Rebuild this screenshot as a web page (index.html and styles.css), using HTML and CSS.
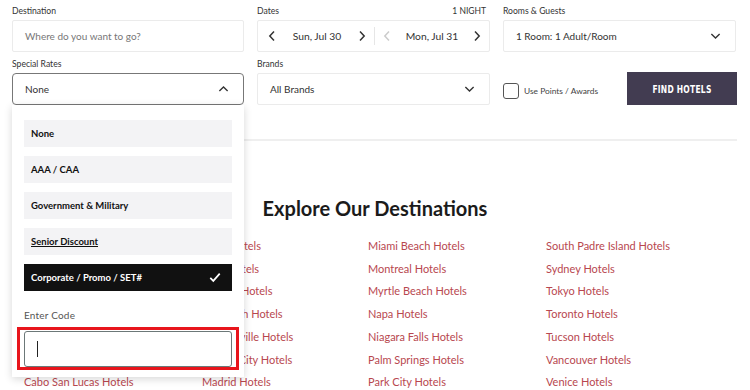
FILE: index.html
```html
<!DOCTYPE html>
<html>
<head>
    <title>Find Hotels</title>
    <link rel="stylesheet" href="styles.css">
</head>
<body>
    <div class="search">
        <div class="search-row">
            <div class="field field-dest">
                <div class="field-label">Destination</div>
                <div class="box box-light"><span class="placeholder">Where do you want to go?</span></div>
            </div>
            <div class="field field-dates">
                <div class="field-label">Dates <span class="nights">1 NIGHT</span></div>
                <div class="box box-light dates">
                    <div class="date">
                        <svg class="arrow" viewBox="0 0 8 12"><path d="M6 1.5L1.8 6L6 10.5" /></svg>
                        <span>Sun, Jul 30</span>
                        <svg class="arrow" viewBox="0 0 8 12"><path d="M2 1.5L6.2 6L2 10.5" /></svg>
                    </div>
                    <div class="date-divider"></div>
                    <div class="date">
                        <svg class="arrow arrow-off" viewBox="0 0 8 12"><path d="M6 1.5L1.8 6L6 10.5" /></svg>
                        <span>Mon, Jul 31</span>
                        <svg class="arrow" viewBox="0 0 8 12"><path d="M2 1.5L6.2 6L2 10.5" /></svg>
                    </div>
                </div>
            </div>
            <div class="field field-rooms">
                <div class="field-label">Rooms &amp; Guests</div>
                <div class="box box-light select">
                    <span>1 Room: 1 Adult/Room</span>
                    <svg class="chevron" viewBox="0 0 12 8"><path d="M1.5 1.8L6 6.2L10.5 1.8" /></svg>
                </div>
            </div>
        </div>

        <div class="search-row">
            <div class="field field-dest rates">
                <div class="field-label">Special Rates</div>
                <div class="box box-open select">
                    <span>None</span>
                    <svg class="chevron" viewBox="0 0 12 8"><path d="M1.5 6.2L6 1.8L10.5 6.2" /></svg>
                </div>

                <div class="rates-menu">
                    <div class="rate">None</div>
                    <div class="rate">AAA / CAA</div>
                    <div class="rate">Government &amp; Military</div>
                    <div class="rate rate-hover">Senior Discount</div>
                    <div class="rate rate-selected">
                        Corporate / Promo / SET#
                        <svg class="check" viewBox="0 0 14 12"><path d="M1.5 6.5L5 10L12.5 1.5" /></svg>
                    </div>
                    <div class="code-label">Enter Code</div>
                    <div class="code-highlight">
                        <div class="code-input"><span class="caret"></span></div>
                    </div>
                </div>
            </div>
            <div class="field field-dates">
                <div class="field-label">Brands</div>
                <div class="box box-light select">
                    <span>All Brands</span>
                    <svg class="chevron" viewBox="0 0 12 8"><path d="M1.5 1.8L6 6.2L10.5 1.8" /></svg>
                </div>
            </div>
            <div class="field-actions">
                <label class="points"><span class="checkbox"></span>Use Points / Awards</label>
                <button class="find-btn"><span>FIND HOTELS</span></button>
            </div>
        </div>
    </div>

    <hr class="divider">

    <h2 class="explore-title">Explore Our Destinations</h2>
    <div class="destinations">
        <div class="dest-col">
            <a href="#">Atlanta Hotels</a>
            <a href="#">Austin Hotels</a>
            <a href="#">Banff Hotels</a>
            <a href="#">Boston Hotels</a>
            <a href="#">Branson Hotels</a>
            <a href="#">Calgary Hotels</a>
            <a href="#">Cabo San Lucas Hotels</a>
        </div>
        <div class="dest-col">
            <a href="#">Kona Hotels</a>
            <a href="#">Lima Hotels</a>
            <a href="#">London Hotels</a>
            <a href="#">Plymouth Hotels</a>
            <a href="#">Jacksonville Hotels</a>
            <a href="#">Kansas City Hotels</a>
            <a href="#">Madrid Hotels</a>
        </div>
        <div class="dest-col">
            <a href="#">Miami Beach Hotels</a>
            <a href="#">Montreal Hotels</a>
            <a href="#">Myrtle Beach Hotels</a>
            <a href="#">Napa Hotels</a>
            <a href="#">Niagara Falls Hotels</a>
            <a href="#">Palm Springs Hotels</a>
            <a href="#">Park City Hotels</a>
        </div>
        <div class="dest-col">
            <a href="#">South Padre Island Hotels</a>
            <a href="#">Sydney Hotels</a>
            <a href="#">Tokyo Hotels</a>
            <a href="#">Toronto Hotels</a>
            <a href="#">Tucson Hotels</a>
            <a href="#">Vancouver Hotels</a>
            <a href="#">Venice Hotels</a>
        </div>
    </div>
</body>
</html>
```

FILE: styles.css
```css
body {
    margin: 0;
    font-family: Lato, "Open Sans", sans-serif;
    color: #333;
    background: #fff;
    overflow: hidden;
    height: 390px;
}

.search {
    padding: 4px 13px 0 12px;
}

.search-row {
    display: flex;
    margin-bottom: 5px;
}

.field {
    display: flex;
    flex-direction: column;
}

.field-dest {
    width: 232px;
    margin-right: 13px;
}

.field-dates {
    width: 233px;
    margin-right: 13px;
}

.field-rooms {
    width: 233px;
}

.field-label {
    display: flex;
    justify-content: space-between;
    height: 14px;
    line-height: 14px;
    margin-bottom: 2px;
    font-size: 8.6px;
    color: #333;
}

.nights {
    font-size: 8.5px;
    margin-right: 4px;
}

.box {
    height: 32px;
    box-sizing: border-box;
    display: flex;
    align-items: center;
    padding: 0 12px;
    font-size: 10px;
    color: #333;
}

.box-light {
    border: 1px solid #ebebeb;
    border-radius: 2px;
}

.box-open {
    border: 1px solid #777;
    border-radius: 4px;
}

.placeholder {
    color: #777;
}

.select {
    justify-content: space-between;
}

.chevron {
    width: 11px;
    height: 8px;
    margin-right: 2px;
    fill: none;
    stroke: #333;
    stroke-width: 1.5;
}

.dates {
    padding: 0 8px 0 10px;
}

.date {
    flex: 1;
    display: flex;
    align-items: center;
    justify-content: space-between;
}

.date span {
    font-size: 10.3px;
}

.date-divider {
    width: 1px;
    height: 18px;
    background: #e6e6e6;
    margin: 0 8px;
}

.arrow {
    width: 8px;
    height: 12px;
    fill: none;
    stroke: #333;
    stroke-width: 1.5;
}

.arrow-off {
    stroke: #ccc;
}

/* special rates dropdown */
.rates {
    position: relative;
}

.rates-menu {
    position: absolute;
    left: 0;
    top: 100%;
    width: 232px;
    box-sizing: border-box;
    padding: 15px 12px 7px;
    background: #fff;
    box-shadow: 0 2px 8px rgba(0, 0, 0, 0.16);
    z-index: 5;
}

.rate {
    display: flex;
    align-items: center;
    justify-content: space-between;
    height: 27px;
    margin-bottom: 9px;
    padding: 0 11px 0 7px;
    background: #f3f3f5;
    font-size: 9.5px;
    font-weight: bold;
    color: #111;
}

.rate-hover {
    text-decoration: underline;
}

.rate-selected {
    background: #111;
    color: #fff;
}

.check {
    width: 12px;
    height: 11px;
    fill: none;
    stroke: #fff;
    stroke-width: 2;
}

.code-label {
    margin-top: 18px;
    height: 12px;
    line-height: 12px;
    font-size: 10px;
    color: #555;
    letter-spacing: 0.2px;
}

.code-highlight {
    margin: 6px -7px 0;
    padding: 1px 4px 0;
    border: 3px solid #e8151c;
}

.code-input {
    height: 36px;
    box-sizing: border-box;
    border: 1px solid #6c7878;
    border-radius: 3px;
    padding: 9px 12px;
}

.caret {
    display: block;
    width: 1px;
    height: 16px;
    background: #222;
}

.field-actions {
    display: flex;
    align-items: flex-end;
    justify-content: space-between;
    width: 234px;
}

.points {
    display: flex;
    align-items: center;
    font-size: 8.4px;
    color: #444;
    margin-bottom: 6px;
}

.checkbox {
    width: 16px;
    height: 16px;
    box-sizing: border-box;
    border: 1px solid #555;
    border-radius: 3px;
    margin-right: 5px;
}

.find-btn {
    width: 110px;
    height: 33px;
    border: none;
    background: #423c51;
    color: #fff;
    font-family: "Liberation Sans Narrow", "DejaVu Sans Condensed", sans-serif;
    font-weight: bold;
    font-size: 10.5px;
    letter-spacing: 0.3px;
}

.find-btn span {
    display: inline-block;
    transform: scaleX(0.8);
}

.divider {
    border: none;
    height: 2px;
    background: #efefef;
    margin: 34px 13px 0 12px;
}

.explore-title {
    margin: 55px 0 0;
    text-align: center;
    font-size: 20px;
    font-weight: bold;
    color: #1b1b1b;
    line-height: 24px;
}

.destinations {
    display: grid;
    grid-template-columns: 178px 166px 178px 1fr;
    padding: 15px 0 0 24px;
}

.dest-col {
    display: flex;
    flex-direction: column;
}

.dest-col a {
    color: #b8474f;
    text-decoration: none;
    font-size: 11px;
    line-height: 22.7px;
}
```
